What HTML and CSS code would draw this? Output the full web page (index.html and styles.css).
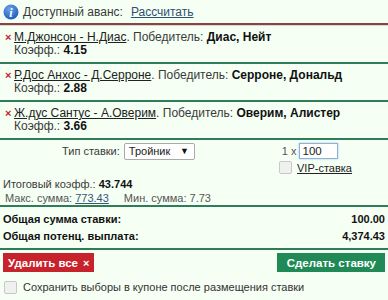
FILE: index.html
```html
<!DOCTYPE html>
<html>
<head>
<meta charset="utf-8">
<link rel="stylesheet" href="styles.css">
</head>
<body>
<div class="slip">
  <div class="advance">
    <svg class="info" width="16" height="16" viewBox="0 0 16 16"><defs><radialGradient id="g" cx="40%" cy="30%" r="70%"><stop offset="0" stop-color="#6fa3e8"/><stop offset="1" stop-color="#1f5fbf"/></radialGradient></defs><circle cx="8" cy="8" r="7.5" fill="url(#g)"/><text x="8" y="12.5" text-anchor="middle" font-family="Liberation Serif, serif" font-style="italic" font-weight="bold" font-size="12" fill="#fff">i</text></svg>
    <span>Доступный аванс:</span>
    <a class="link">Рассчитать</a>
  </div>
  <div class="sel first">
    <div class="sel-line"><span class="x">×</span><a class="ev">М.Джонсон - Н.Диас</a>. Победитель: <b>Диас, Нейт</b></div>
    <div class="odds">Коэфф.: <b>4.15</b></div>
  </div>
  <div class="sel">
    <div class="sel-line"><span class="x">×</span><a class="ev">Р.Дос Анхос - Д.Серроне</a>. Победитель: <b>Серроне, Дональд</b></div>
    <div class="odds">Коэфф.: <b>2.88</b></div>
  </div>
  <div class="sel">
    <div class="sel-line"><span class="x">×</span><a class="ev">Ж.дус Сантус - А.Оверим</a>. Победитель: <b>Оверим, Алистер</b></div>
    <div class="odds">Коэфф.: <b>3.66</b></div>
  </div>
  <div class="type-block">
    <div class="type-row">
      <span class="type-label">Тип ставки:</span>
      <span class="select">Тройник<span class="arrow">▼</span></span>
      <span class="stake">1 x <span class="input">100</span></span>
    </div>
    <div class="vip-row"><span class="cb"></span><a class="vip">VIP-ставка</a></div>
    <div class="total-odds">Итоговый коэфф.: <b>43.744</b></div>
    <div class="limits"><span>Макс. сумма: <a class="link">773.43</a></span><span class="min">Мин. сумма: 7.73</span></div>
  </div>
  <div class="totals">
    <div class="trow"><span>Общая сумма ставки:</span><span>100.00</span></div>
    <div class="trow"><span>Общая потенц. выплата:</span><span>4,374.43</span></div>
  </div>
  <div class="buttons">
    <span class="btn del">Удалить все <span class="bx">×</span></span>
    <span class="btn place">Сделать ставку</span>
  </div>
  <div class="save"><span class="cb"></span>Сохранить выборы в купоне после размещения ставки</div>
</div>
</body>
</html>
```
FILE: styles.css
```css
html, body { margin: 0; padding: 0; background: #f5fff4; }
body { font-family: "Liberation Sans", Arial, sans-serif; font-size: 12px; color: #3a3a3a; width: 388px; height: 300px; overflow: hidden; }
.slip { display: flex; flex-direction: column; }
.advance { display: flex; align-items: center; height: 23px; padding-left: 3px; gap: 4px; border-bottom: 2px solid #7d4a4a; box-shadow: 0 1px 0 #f3c9c9; }
.advance .info { flex: none; }
.advance span { margin-right: 4px; }
.link { color: #2f4f72; text-decoration: underline; }
.sel { padding: 5px 4px 5px 5px; border-bottom: 2px solid #2f7d58; line-height: 13px; }
.sel.first { padding-top: 6px; }
.sel-line { white-space: nowrap; }
.x { color: #c0272d; font-weight: bold; display: inline-block; width: 9px; font-size: 11px; }
.ev { color: #222; text-decoration: underline; }
.odds { padding-left: 9px; }
b { color: #111; }
.type-block { padding: 2px 3px 0 3px; border-bottom: 2px solid #2f7d58; font-size: 11px; }
.type-row { display: flex; align-items: center; height: 18px; }
.type-label { margin-left: 59px; margin-right: 4px; }
.select { box-sizing: border-box; display: inline-flex; justify-content: space-between; align-items: center; width: 71px; height: 17px; border: 1px solid #aaa; background: #fff; padding: 0 5px 0 4px; border-radius: 2px; color: #222; }
.arrow { font-size: 9px; color: #111; }
.stake { margin-left: 87px; color: #555; display: flex; align-items: center; }
.input { box-sizing: border-box; display: inline-block; width: 39px; height: 16px; line-height: 14px; border: 1px solid #8fb1d8; background: #fff; padding-left: 2px; color: #222; margin-left: 3px; box-shadow: 0 0 2px #9cc3f0; font-size: 11.5px; }
.vip-row { display: flex; align-items: center; margin-left: 276px; height: 15px; margin-top: 0; }
.cb { display: inline-block; width: 11px; height: 11px; border: 1px solid #c8c8c8; border-radius: 2px; background: #f0f0f0; margin-right: 5px; }
.vip { color: #222; text-decoration: underline; }
.total-odds { margin-top: 2px; line-height: 14px; }
.limits { line-height: 14px; padding-left: 2px; color: #555; }
.limits .link { color: #35567a; }
.min { margin-left: 15px; }
.totals { padding: 4px 3px 3px 3px; border-bottom: 2px solid #2f7d58; font-size: 11px; }
.trow { display: flex; justify-content: space-between; font-weight: bold; color: #111; line-height: 17px; }
.buttons { display: flex; justify-content: space-between; padding: 3px 3px 0 3px; }
.btn { display: inline-flex; align-items: center; height: 19px; padding: 0 5px; color: #fff; font-weight: bold; font-size: 11.5px; }
.del { background: #c8232c; }
.bx { font-size: 11px; margin-left: 5px; }
.place { background: #1f8a55; padding: 0 9px 0 10px; }
.save { display: flex; align-items: center; padding: 8px 0 0 4px; color: #333; font-size: 11px; line-height: 14px; }
.save .cb { margin-right: 6px; }
```
